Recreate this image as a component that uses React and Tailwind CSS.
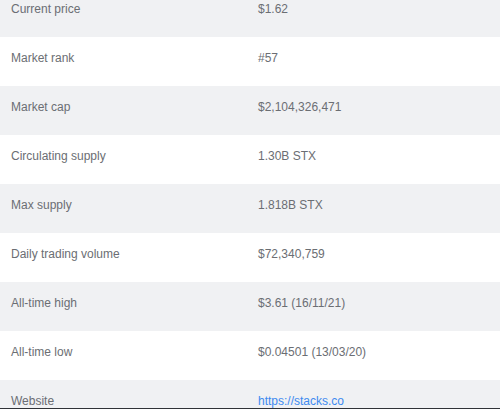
import React from 'react';

const rows = [
    { label: 'Current price', value: '$1.62' },
    { label: 'Market rank', value: '#57' },
    { label: 'Market cap', value: '$2,104,326,471' },
    { label: 'Circulating supply', value: '1.30B STX' },
    { label: 'Max supply', value: '1.818B STX' },
    { label: 'Daily trading volume', value: '$72,340,759' },
    { label: 'All-time high', value: '$3.61 (16/11/21)' },
    { label: 'All-time low', value: '$0.04501 (13/03/20)' },
    { label: 'Website', value: 'https://stacks.co', link: true },
];

function StatRow({ label, value, link, odd }) {
    return (
        <div className={(odd ? 'bg-[#f0f1f3]' : 'bg-white') + ' flex h-[49px] pt-[13px] pl-[11px] text-[12px] leading-[16px]'}>
            <div className="w-[247px] text-[#6b6e73]">{label}</div>
            {link
                ? <a href="#" className="text-[#3d8af0]">{value}</a>
                : <div className="text-[#6b6e73]">{value}</div>}
        </div>
    );
}

export default function App() {
    return (
        <div className="h-[409px] overflow-hidden border-b border-[#2f3237] bg-white" style={{ fontFamily: '"Liberation Sans", Arial, sans-serif' }}>
            <div className="-mt-[12px]">
                {rows.map((row, i) => <StatRow key={row.label} odd={i % 2 === 0} {...row} />)}
            </div>
        </div>
    );
}
